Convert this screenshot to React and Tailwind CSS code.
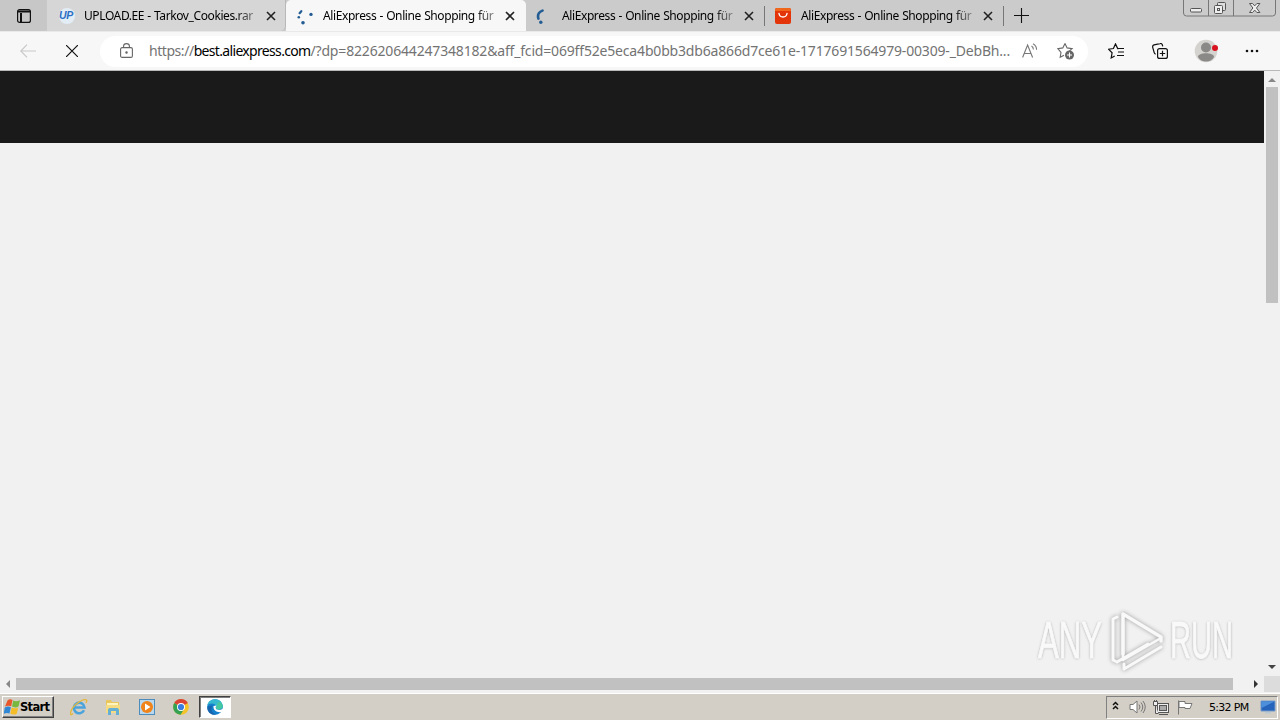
import React from 'react';

const tabs = [
  { id: 1, title: 'UPLOAD.EE - Tarkov_Cookies.rar', icon: 'upload' },
  { id: 2, title: 'AliExpress - Online Shopping für', icon: 'dots', active: true },
  { id: 3, title: 'AliExpress - Online Shopping für', icon: 'arc' },
  { id: 4, title: 'AliExpress - Online Shopping für', icon: 'ali' },
];

const TabIcon = ({ type }) => {
  if (type === 'upload') {
    return (
      <div className="flex h-4 w-4 items-center justify-center rounded-full bg-[#e3edf6] pr-0.5 pt-px font-['Liberation_Sans'] text-[10.5px] font-bold italic tracking-[-0.3px] text-[#2b6fc4]">
        UP
      </div>
    );
  }
  if (type === 'ali') {
    return (
      <svg viewBox="0 0 16 16" className="-ml-px mr-px mt-px h-4 w-4">
        <rect width="16" height="16" rx="2" fill="#e43409" />
        <path d="M0 3V2a2 2 0 0 1 2-2h12a2 2 0 0 1 2 2v1z" fill="#f0661a" />
        <path d="M4 5.5c.7 4.7 7.3 4.7 8 0" fill="none" stroke="#fff" strokeWidth="1.4" strokeLinecap="round" />
      </svg>
    );
  }
  return (
    <svg viewBox="0 0 16 16" className="-ml-px mr-px mt-0.5 h-4 w-4" fill="#245c94">
      {type === 'dots' ? (
        <>
          <path d="M4.3 2.2 2.6 4.2" stroke="#245c94" strokeWidth="2.2" strokeLinecap="round" />
          <circle cx="1.8" cy="8.2" r="1.3" />
          <circle cx="6" cy="13.8" r="1.8" />
          <circle cx="14" cy="5.4" r="1.7" />
        </>
      ) : (
        <>
          <path d="M6.5 1.6C3 3 1.3 6 2.4 9.6" fill="none" stroke="#245c94" strokeWidth="2.6" strokeLinecap="round" />
          <circle cx="4.8" cy="13.2" r="1.7" />
        </>
      )}
    </svg>
  );
};

const Tab = ({ tab }) => (
  <div
    className={`flex h-[31px] shrink-0 items-center pl-3 ${
      tab.active
        ? 'w-[240px] rounded-t-[5px] bg-[#f7f7f7]'
        : tab.id === 1
          ? 'w-[239px] rounded-br-[5px] border-r border-[#b8b8b8] bg-[#d6d6d6]'
          : tab.id === 3
            ? 'w-[238px] pl-[11px]'
            : 'w-[239px]'
    }`}
  >
    <TabIcon type={tab.icon} />
    <span className="ml-[9px] w-[172px] overflow-hidden whitespace-nowrap bg-linear-to-r from-black from-85% to-[#909090] bg-clip-text text-[12px] leading-5 tracking-[-0.4px] text-transparent [word-spacing:0.5px]">
      {tab.title}
    </span>
    <svg viewBox="0 0 10 10" className="ml-[10px] mt-px h-[10px] w-[10px] shrink-0" stroke="#222" strokeWidth="1.6">
      <path d="m1 1 8 8M9 1 1 9" />
    </svg>
    {tab.id > 2 && <div className="-mr-px ml-auto h-5 w-px bg-[#777]" />}
  </div>
);

const WindowControls = () => (
  <svg viewBox="0 0 93 17" className="ml-auto mr-1 h-[17px] w-[93px] self-start" fill="none" stroke="#555">
    <path d="M.5 0v13a3 3 0 0 0 3 3h86a3 3 0 0 0 3-3V0M25.5 0v16M50.5 0v16" stroke="#777" />
    <rect x="7.5" y="8.5" width="11" height="3.5" rx="1" fill="#eee" />
    <rect x="34.5" y="2.5" width="8" height="8" rx="1" fill="#ddd" />
    <rect x="31.5" y="5.5" width="8" height="8" rx="1" fill="#eee" />
    <rect x="34.5" y="8.5" width="2" height="2" />
    <path d="M66.5 3.500h3l2.200 2.400 2.200-2.400h3L73.500 8l3.400 4.500h-3l-2.200-2.400-2.200 2.400h-3L69.900 8z" fill="#eee" />
  </svg>
);

const TabStrip = () => (
  <div className="flex h-[31px] items-center bg-[#cbcbcb]">
    <div className="flex h-full w-[47px] items-center justify-center bg-[#c7c7c7]">
      <svg viewBox="0 0 14 14" className="h-[14px] w-[14px]" fill="none" stroke="#111" strokeWidth="1.2">
        <rect x=".6" y=".6" width="12.800" height="12.800" rx="2" />
        <path d="M1 2.400h12M4 4v9" strokeWidth="2" />
      </svg>
    </div>
    {tabs.map((tab) => (
      <Tab key={tab.id} tab={tab} />
    ))}
    <svg viewBox="0 0 15 15" className="ml-[11px] h-[15px] w-[15px]" stroke="#111" strokeWidth="1.100">
      <path d="M7.500 0v15M0 7.500h15" />
    </svg>
    <WindowControls />
  </div>
);

const Toolbar = () => (
  <div className="flex h-10 items-center border-b border-t border-t-[#e9e9e9] border-b-[#b9b9b9] bg-[#f7f7f7]">
    <svg viewBox="0 0 16 14" className="ml-5 h-[14px] w-4" fill="none" stroke="#c9c9c9" strokeWidth="1.2">
      <path d="M16 7H1M7 .7.800 7 7 13.300" />
    </svg>
    <svg viewBox="0 0 12 12" className="ml-[30px] h-3 w-3" fill="none" stroke="#111" strokeWidth="1.2">
      <path d="m0 0 12 12M12 0 0 12" />
    </svg>
    <div className="ml-[22px] flex h-[31px] w-[988px] items-center rounded-full bg-white">
      <svg viewBox="0 0 13 15" className="-mt-px ml-5 h-[15px] w-[13px] shrink-0" fill="none" stroke="#666" strokeWidth="1.100">
        <rect x=".6" y="4.600" width="11.800" height="9.800" rx="1.500" />
        <path d="M3.600 4.500V3a2.900 2.400 0 0 1 5.800 0v1.500" />
        <circle cx="6.500" cy="9.500" r=".7" fill="#666" />
      </svg>
      <div className="ml-4 w-[864px] shrink-0 whitespace-nowrap text-[14px] leading-5 text-[#737373]">
        <span className="tracking-[-0.45px]">https://</span>
        <span className="tracking-[-0.67px] text-black">best.aliexpress.com</span>
        <span className="tracking-[-0.175px]">/?dp=822620644247348182&amp;aff_fcid=069ff52e5eca4b0bb3db6a866d7ce61e-1717691564979-00309-_DebBh...</span>
      </div>
      <svg viewBox="0 0 17 16" className="ml-[9px] h-4 w-[17px] shrink-0" fill="none" stroke="#777" strokeWidth="1.100">
        <path d="m.6 14.500 5-12.500 5 12.500M2.300 10.500h6.500M9.500 3c1.300.7 1.900 2 1.900 3.500M11 .8c2.300 1.200 3.600 3.300 3.600 6" />
      </svg>
      <svg viewBox="0 0 18 18" className="ml-[18px] h-[18px] w-[18px] shrink-0" fill="none" stroke="#666" strokeWidth="1.100">
        <path d="m8 1.500 2.100 4.400 5 .7-3.600 3.300M7 13.200l-3.800 2 .8-4.700L.8 6.600l5-.7L8 1.500" />
        <circle cx="12.500" cy="13" r="4.500" fill="#666" stroke="none" />
        <path d="M12.500 10.500v5M10 13h5" stroke="#fff" />
      </svg>
    </div>
    <svg viewBox="0 0 17 16" className="ml-5 h-4 w-[17px]" fill="none" stroke="#111" strokeWidth="1.200">
      <path d="M10.500 5.600H9.700L7.500.900 5.400 5.500l-4.900.7 3.600 3.500-.9 5.200 3.500-2M9.500 5.500H16M10 9h6M9 12.500h7" />
    </svg>
    <svg viewBox="0 0 16 16" className="ml-[27px] h-4 w-4" fill="none" stroke="#111" strokeWidth="1.200">
      <rect x="5.600" y="5.600" width="9.800" height="9.800" rx="2" />
      <path d="M10.500 7.800v5.400M7.800 10.500h5.400M3.700 11.200a2 2 0 0 1-1.500-1.500L.7 4.300a2 2 0 0 1 1.400-2.400L8 .6a2 2 0 0 1 2.400 1.400l.3 1.300" />
    </svg>
    <svg viewBox="0 0 24 24" className="ml-[26px] h-6 w-6">
      <circle cx="12" cy="12" r="11.300" fill="#d5d3cf" />
      <circle cx="12" cy="8.500" r="5" fill="#8b8987" />
      <path d="M4 18c0-5 16-5 16 0-3 6-13 6-16 0z" fill="#8b8987" />
      <circle cx="21" cy="9" r="3" fill="#d9121f" />
    </svg>
    <svg viewBox="0 0 14 4" className="ml-[27px] h-1 w-[14px]" fill="#111">
      <circle cx="2" cy="2" r="1.300" />
      <circle cx="7" cy="2" r="1.300" />
      <circle cx="12" cy="2" r="1.300" />
    </svg>
  </div>
);

const Watermark = () => (
  <div className="absolute right-[46px] top-[535px] flex h-[70px] items-center font-['Liberation_Sans'] text-[51px] text-[#f9f9f9] [-webkit-text-stroke:1px_#f9f9f9] [text-shadow:0_0_3px_#aaa,0_1px_3px_#ccc]">
    <div className="w-[70px]">
      <span className="inline-block origin-left scale-x-[0.61] leading-none">ANY</span>
    </div>
    <svg viewBox="0 0 62 70" className="mb-1 h-[70px] w-[62px] drop-shadow-[0_0_2px_#999]" fill="none" stroke="#f9f9f9" strokeWidth="3.500" strokeLinejoin="round" strokeLinecap="round">
      <path d="M53 37V33L15 10v40" />
      <path d="M15 20v36l38-22" strokeWidth="2.500" />
      <path d="M9 13l-4 2v41l4 2 31-18M16 60v5l37-22" strokeWidth="3" />
    </svg>
    <div className="w-[64px]">
      <span className="inline-block origin-left scale-x-[0.57] leading-none">RUN</span>
    </div>
  </div>
);

const Page = () => (
  <div className="relative flex h-[605px]">
    <div className="w-[1264px] bg-[#f1f1f1]">
      <div className="h-[72px] bg-[#1a1a1a]" />
    </div>
    <div className="flex w-4 flex-col items-center bg-[#f1f1f1] pb-[7px] pt-[7px]">
      <svg viewBox="0 0 8 4" className="h-1 w-2" fill="#888">
        <path d="m4 0 4 4H0z" />
      </svg>
      <div className="mt-[5px] h-[216px] w-3 bg-[#c1c1c1]" />
      <svg viewBox="0 0 8 4" className="mt-auto h-1 w-2" fill="#444">
        <path d="m4 4 4-4H0z" />
      </svg>
    </div>
    <Watermark />
  </div>
);

const BottomScrollbar = () => (
  <div className="flex h-[17px] items-center bg-[#f1f1f1] pb-px">
    <svg viewBox="0 0 4 8" className="ml-[6px] h-2 w-1" fill="#888">
      <path d="m0 4 4-4v8z" />
    </svg>
    <div className="ml-[6px] h-3 w-[1217px] bg-[#c1c1c1]" />
    <svg viewBox="0 0 4 8" className="ml-[21px] h-2 w-1" fill="#333">
      <path d="m4 4-4-4v8z" />
    </svg>
    <div className="ml-auto h-full w-4 bg-[#dcdcdc]" />
  </div>
);

const StartFlag = () => (
  <svg viewBox="0 0 16 16" className="h-4 w-4">
    <path d="M3.500 1.500C5 0 7 0 8.500 1L7.200 7.300C5.500 6.400 3.200 6.500 1 7.600z" fill="#e8582b" />
    <path d="M9.200 1.400c2 1.200 4 1 6.800-.2L14.500 7.500c-2 1.200-4.500 1.200-6.500.1z" fill="#78b83f" />
    <path d="M.8 8.500c2-1.100 4.400-1.200 6.100-.3l-1.400 6.300c-1.700-.9-4-.8-5.800.3z" fill="#3187d4" />
    <path d="M7.700 8.500c2 1.100 4.500 1.100 6.500-.1l-1.400 6.300c-2 1.200-4.500 1.200-6.500.1z" fill="#f4bd28" />
  </svg>
);

const Taskbar = () => (
  <div className="flex h-[27px] items-center border-t border-white bg-[#d4cfc6] font-['DejaVu_Sans','Noto_Sans',sans-serif] text-black">
    <div className="ml-0.5 flex h-[22px] w-[52px] items-center border border-b-[#404040] border-l-white border-r-[#404040] border-t-white pl-px shadow-[inset_-1px_-1px_0_#808080]">
      <StartFlag />
      <span className="pt-px text-[11.5px] font-bold leading-none tracking-[-0.7px]">Start</span>
    </div>
    <svg viewBox="0 0 18 18" className="ml-4 h-[18px] w-[18px]" fill="none">
      <path d="M14 12.300A5.300 5.300 0 1 1 14.500 9.500H5" stroke="#4ba3dc" strokeWidth="2.600" />
      <path d="M3 15.500C-1 20-.500 11 7 5.500 13 1 19 0 16 5" stroke="#e5b83b" strokeWidth="1.300" />
    </svg>
    <svg viewBox="0 0 16 16" className="ml-[17px] h-4 w-4">
      <path d="M1 3V1h5l1 2h7v11H1z" fill="#e9c75e" />
      <path d="M2 4h11v3H2z" fill="#fff5bc" />
      <path d="M1 6h14v8H1z" fill="#f5dc83" />
      <path d="M3 16v-5q0-2 2-2h7q2 0 2 2v5h-3v-4H6v4z" fill="#65afd4" />
    </svg>
    <svg viewBox="0 0 16 16" className="ml-[18px] h-4 w-4">
      <rect x=".5" y=".5" width="15" height="15" fill="#b9d8ed" stroke="#4c8dbd" />
      <circle cx="8" cy="8" r="6" fill="#f08319" />
      <path d="M6 4.500v7L11.500 8z" fill="#fff" />
    </svg>
    <svg viewBox="0 0 16 16" className="ml-[18px] h-4 w-4">
      <circle cx="8" cy="8" r="7.800" fill="#f3c329" />
      <path d="M8 8 1.200 4.100A7.800 7.800 0 0 1 14.800 4.100z" fill="#db4334" />
      <path d="M8 8 1.200 4.100A7.800 7.800 0 0 0 7.500 15.800L11 10z" fill="#35a153" />
      <circle cx="8" cy="8" r="4" fill="#fff" />
      <circle cx="8" cy="8" r="3.100" fill="#397de0" />
    </svg>
    <div className="ml-[10px] flex h-[22px] w-[32px] items-center justify-center border border-b-white border-l-[#404040] border-r-white border-t-[#404040] bg-white shadow-[inset_1px_1px_0_#808080]">
      <svg viewBox="0 0 16 16" className="h-4 w-4">
        <circle cx="8" cy="8" r="7.800" fill="#1380cd" />
        <path d="M.3 7C1-1.500 14.500-2 15.700 6.500c.5 5-6.700 5.500-6.700 2.200C10 4 2 3 .3 7z" fill="#36b9cf" />
        <path d="M11 3c3 0 4.500 2 4.700 4-.2 4-6.200 4.500-6.700 1.700z" fill="#45c8a0" />
        <path d="M9.500 6.500c-2.500 3.500 1 6 6.500 3.200v3c-5 1.500-10-.5-9.500-5.700z" fill="#fff" />
        <path d="M5.700 6.500c-3 4 0 8.500 4.300 9C3 17-.500 11.500.5 7.500z" fill="#1765ad" />
      </svg>
    </div>
    <div className="ml-auto mr-[2px] flex h-[23px] w-[172px] items-center border border-b-white border-l-[#808080] border-r-white border-t-[#808080] pl-[5px]">
      <svg viewBox="0 0 7 9" className="mb-1 h-[9px] w-[7px]" fill="none" stroke="#111" strokeWidth="1.500">
        <path d="m1 4 2.500-2.500L6 4M1 8l2.500-2.500L6 8" />
      </svg>
      <svg viewBox="0 0 17 14" className="ml-[10px] h-[14px] w-[17px]" fill="none" stroke="#777">
        <path d="M1 4.500h3L8 1v12L4 9.500H1z" fill="#fff" />
        <path d="M10 4.500q2 2.500 0 5M12 2.500q3.500 4.500 0 9M14 1q4.500 6 0 12" />
      </svg>
      <svg viewBox="0 0 16 15" className="ml-[7px] h-[15px] w-4" fill="#eee" stroke="#555">
        <rect x="4.500" y="3.500" width="11" height="9" />
        <rect x="6.500" y="5.500" width="7" height="5" fill="#aaa" />
        <path d="M6 14.500h9M.5 1.500h4v4h-4zM2.500 5.500v8h3M1.500 0v2M3.500 0v2" />
      </svg>
      <svg viewBox="0 0 16 15" className="ml-2 h-[15px] w-4" fill="#fff" stroke="#777">
        <path d="M1.500.5v14M2 1.500h6v2h7l-2 5H8v-1H2z" />
      </svg>
      <span className="ml-4 w-[42px] whitespace-nowrap text-[11px] leading-none tracking-[-0.7px]">5:32 PM</span>
      <svg viewBox="0 0 16 14" className="ml-[9px] h-[14px] w-4">
        <path d="M1 1h14v10H1z" fill="#2663ba" stroke="#759bc9" />
        <path d="M1.500 1.500h13L1.500 8z" fill="#4e8fdb" />
        <path d="M5 12h6v1.500H5z" fill="#bac8d2" />
      </svg>
    </div>
  </div>
);

const App = () => (
  <div className="h-[720px] w-[1280px] overflow-hidden bg-[#f1f1f1] font-['Noto_Sans','Open_Sans',sans-serif]">
    <TabStrip />
    <Toolbar />
    <Page />
    <BottomScrollbar />
    <Taskbar />
  </div>
);

export default App;
